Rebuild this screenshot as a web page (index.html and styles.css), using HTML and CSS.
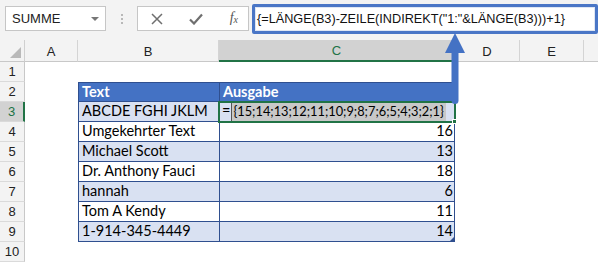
FILE: index.html
```html
<!DOCTYPE html>
<html>
<head>
<meta charset="utf-8">
<link rel="stylesheet" href="styles.css">
</head>
<body>
<div class="toolbar">
  <div class="namebox"><span class="name">SUMME</span><span class="caret"></span></div>
  <div class="grip"><i></i><i></i><i></i></div>
  <div class="fxbox">
    <svg class="ico" width="12" height="12" viewBox="0 0 12 12"><path d="M1 1L11 11M11 1L1 11" stroke="#6f6f6f" stroke-width="1.5" fill="none"/></svg>
    <svg class="ico" width="14" height="12" viewBox="0 0 14 12"><path d="M1 6.5L5 10.5L13 1.5" stroke="#6f6f6f" stroke-width="2.2" fill="none"/></svg>
    <span class="fx">f<span class="sx">x</span></span>
  </div>
  <div class="formula"><span class="ftext">{=LÄNGE(B3)-ZEILE(INDIREKT("1:"&amp;LÄNGE(B3)))+1}</span></div>
</div>
<div class="sheet">
  <div class="corner"><span class="tri"></span></div>
  <div class="ch">A</div><div class="ch">B</div><div class="ch sel">C</div><div class="ch">D</div><div class="ch">E</div><div class="ch last"></div>

  <div class="rh">1</div><div class="c"></div><div class="c"></div><div class="c"></div><div class="c"></div><div class="c"></div><div class="c"></div>

  <div class="rh">2</div><div class="c"></div><div class="c tb hd">Text</div><div class="c tc hd">Ausgabe</div><div class="c"></div><div class="c"></div><div class="c"></div>

  <div class="rh rsel">3</div><div class="c"></div><div class="c tb alt">ABCDE FGHI JKLM</div><div class="c tc alt active">=<span class="arr">{15;14;13;12;11;10;9;8;7;6;5;4;3;2;1}</span><span class="handle"></span></div><div class="c"></div><div class="c"></div><div class="c"></div>

  <div class="rh">4</div><div class="c"></div><div class="c tb">Umgekehrter Text</div><div class="c tc num">16</div><div class="c"></div><div class="c"></div><div class="c"></div>

  <div class="rh">5</div><div class="c"></div><div class="c tb alt">Michael Scott</div><div class="c tc alt num">13</div><div class="c"></div><div class="c"></div><div class="c"></div>

  <div class="rh">6</div><div class="c"></div><div class="c tb">Dr. Anthony Fauci</div><div class="c tc num">18</div><div class="c"></div><div class="c"></div><div class="c"></div>

  <div class="rh">7</div><div class="c"></div><div class="c tb alt">hannah</div><div class="c tc alt num">6</div><div class="c"></div><div class="c"></div><div class="c"></div>

  <div class="rh">8</div><div class="c"></div><div class="c tb">Tom A Kendy</div><div class="c tc num">11</div><div class="c"></div><div class="c"></div><div class="c"></div>

  <div class="rh">9</div><div class="c"></div><div class="c tb alt">1-914-345-4449</div><div class="c tc alt num">14<span class="resize"></span></div><div class="c"></div><div class="c"></div><div class="c"></div>

  <div class="rh">10</div><div class="c"></div><div class="c"></div><div class="c"></div><div class="c"></div><div class="c"></div><div class="c"></div>
</div>
<svg class="arrow" width="30" height="76" viewBox="0 0 30 76">
  <rect x="11.5" y="16" width="7" height="55" rx="3.5" fill="#4472c4"/>
  <polygon points="15,0 25,20 5,20" fill="#4472c4"/>
</svg>
</body>
</html>
```

FILE: styles.css
```css
* { box-sizing: border-box; }
html, body { margin: 0; padding: 0; }
body {
  width: 598px;
  height: 262px;
  overflow: hidden;
  background: #ffffff;
  font-family: "Liberation Sans", Arial, sans-serif;
  position: relative;
}
.toolbar {
  height: 40px;
  background: #f3f3f3;
  display: flex;
  align-items: flex-start;
  padding: 6px 0 0 5px;
}
.namebox {
  width: 101px;
  height: 25px;
  background: #fff;
  border: 1px solid #c6c6c6;
  display: flex;
  align-items: center;
  justify-content: space-between;
  padding: 0 6px 0 6px;
}
.name { font-size: 13px; color: #222; }
.caret {
  width: 0; height: 0;
  border-left: 4px solid transparent;
  border-right: 4px solid transparent;
  border-top: 4px solid #777;
}
.grip {
  width: 31px;
  height: 25px;
  display: flex;
  flex-direction: column;
  align-items: center;
  justify-content: center;
  gap: 2px;
}
.grip i { display: block; width: 2px; height: 2px; background: #b8b8b8; }
.fxbox {
  width: 112px;
  height: 25px;
  background: #fff;
  border: 1px solid #c6c6c6;
  display: flex;
  align-items: center;
  justify-content: space-between;
  padding: 0 10px 0 13px;
}
.fx {
  font-family: "Liberation Serif", "Times New Roman", serif;
  font-style: italic;
  font-size: 14px;
  color: #555;
  margin-bottom: 2px;
}
.sx { font-size: 10px; position: relative; top: 1px; }
.formula {
  margin-left: 3px;
  margin-top: -2px;
  width: 346px;
  height: 30px;
  background: #fff;
  border: 3px solid #4a76c6;
  border-radius: 2px;
  box-shadow: inset 0 0 0 1px #dfe6f3;
  display: flex;
  align-items: center;
  padding-left: 2px;
}
.ftext { font-size: 12.7px; color: #111; white-space: nowrap; }

.sheet {
  display: grid;
  grid-template-columns: 25px 53px 141px 236px 65px 64px 14px;
  grid-template-rows: 22px repeat(10, 20px);
  font-family: Lato, "Liberation Sans", sans-serif;
}
.corner {
  background: #f3f3f3;
  border-right: 1px solid #d0d0d0;
  border-bottom: 1px solid #c8c8c8;
  position: relative;
}
.tri {
  position: absolute;
  right: 3px; bottom: 3px;
  width: 0; height: 0;
  border-left: 11px solid transparent;
  border-bottom: 11px solid #b9b9b9;
}
.ch {
  background: #f3f3f3;
  border-right: 1px solid #d4d4d4;
  border-bottom: 1px solid #c8c8c8;
  font-family: "Liberation Sans", Arial, sans-serif;
  font-size: 13px;
  color: #222;
  display: flex;
  align-items: center;
  justify-content: center;
  padding-top: 1px;
}
.ch.last { border-right: none; }
.ch.sel {
  background: #d2d2d2;
  border-bottom: 2px solid #217346;
  color: #217346;
  border-right-color: #c0c0c0;
}
.rh {
  background: #f3f3f3;
  border-right: 1px solid #c8c8c8;
  border-bottom: 1px solid #dadada;
  font-family: "Liberation Sans", Arial, sans-serif;
  font-size: 13px;
  color: #222;
  display: flex;
  align-items: center;
  justify-content: center;
}
.rh.rsel {
  background: #d2d2d2;
  border-right: 2px solid #217346;
  color: #217346;
}
.c {
  font-size: 14.5px;
  color: #000;
  white-space: nowrap;
  display: flex;
  align-items: center;
  position: relative;
  line-height: 1;
}
.tb, .tc {
  border-left: 1px solid #2f4f8f;
  border-bottom: 1px solid #2f4f8f;
  padding-left: 3px;
}
.tc { border-right: 1px solid #2f4f8f; }
.hd {
  background: #4472c4;
  color: #fff;
  font-weight: bold;
  border-top: 1px solid #2f4f8f;
}
.alt { background: #d9e1f2; }
.num { justify-content: flex-end; padding-right: 1px; }
.active {
  outline: 2px solid #217346;
  outline-offset: -1px;
  z-index: 2;
  padding-left: 2px;
}
.arr {
  font-size: 12.8px;
  background: #c8c8c8;
  margin-left: 1px;
  padding: 3px 2px 3px 1px;
  border-left: 1px solid #555;
}
.handle {
  position: absolute;
  right: -3px; bottom: -3px;
  width: 5px; height: 5px;
  background: #217346;
  border: 1px solid #fff;
}
.resize {
  position: absolute;
  right: 0; bottom: 0;
  width: 0; height: 0;
  border-left: 4px solid transparent;
  border-bottom: 4px solid #2f4f8f;
}
.arrow {
  position: absolute;
  left: 440px;
  top: 33px;
  z-index: 5;
}
```
